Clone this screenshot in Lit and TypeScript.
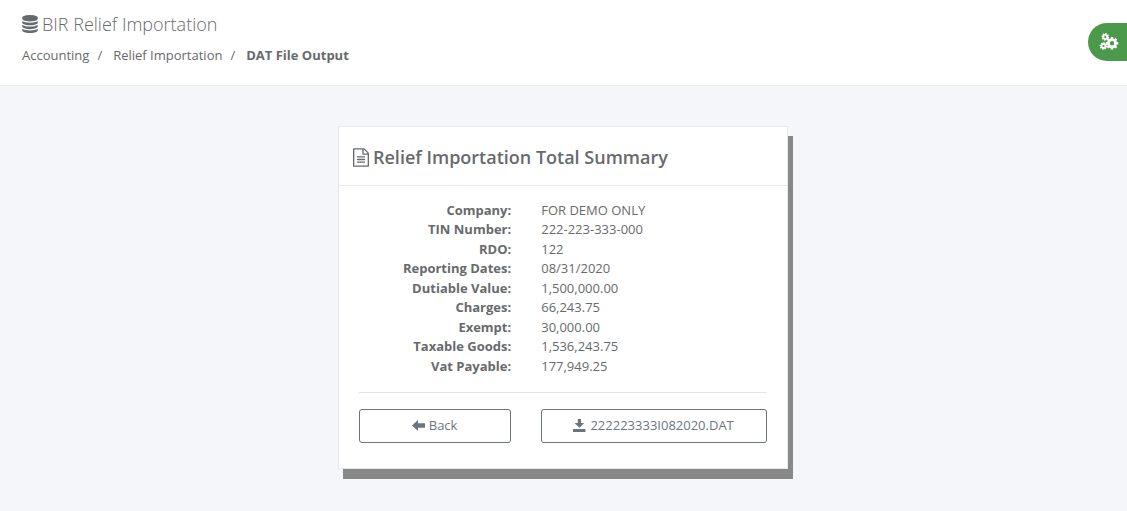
import { LitElement, html, css, svg } from "lit";
import { customElement } from "lit/decorators.js";

const DATABASE =
  "M768 768q237 0 443-43t325-127v170q0 69-103 128t-280 93.5-385 34.5-385-34.5-280-93.5-103-128v-170q119 84 325 127t443 43zm0 768q237 0 443-43t325-127v170q0 69-103 128t-280 93.5-385 34.5-385-34.5-280-93.5-103-128v-170q119 84 325 127t443 43zm0-384q237 0 443-43t325-127v170q0 69-103 128t-280 93.5-385 34.5-385-34.5-280-93.5-103-128v-170q119 84 325 127t443 43zm0-1152q208 0 385 34.5t280 93.5 103 128v128q0 69-103 128t-280 93.5-385 34.5-385-34.5-280-93.5-103-128v-128q0-69 103-128t280-93.5 385-34.5z";
const FILE_TEXT =
  "M1468 380q28 28 48 76t20 88v1152q0 40-28 68t-68 28h-1344q-40 0-68-28t-28-68v-1600q0-40 28-68t68-28h896q40 0 88 20t76 48zm-444-244v376h376q-10-29-22-41l-313-313q-12-12-41-22zm384 1528v-1024h-416q-40 0-68-28t-28-68v-416h-768v1536h1280zm-1024-864q0-14 9-23t23-9h704q14 0 23 9t9 23v64q0 14-9 23t-23 9h-704q-14 0-23-9t-9-23v-64zm736 224q14 0 23 9t9 23v64q0 14-9 23t-23 9h-704q-14 0-23-9t-9-23v-64q0-14 9-23t23-9h704zm0 256q14 0 23 9t9 23v64q0 14-9 23t-23 9h-704q-14 0-23-9t-9-23v-64q0-14 9-23t23-9h704z";

/** Outline of a toothed wheel with a round hole in the middle. */
function gear(cx: number, cy: number, outer: number, inner: number, hole: number, teeth = 8, turn = 0): string {
  const step = (Math.PI * 2) / teeth;
  const at = (r: number, a: number) =>
    `${(cx + r * Math.cos(a)).toFixed(2)} ${(cy + r * Math.sin(a)).toFixed(2)}`;
  const points: string[] = [];
  for (let i = 0; i < teeth; i++) {
    const a = i * step + turn;
    points.push(at(inner, a - step * 0.34), at(outer, a - step * 0.24), at(outer, a + step * 0.24), at(inner, a + step * 0.34));
  }
  return `M${points.join("L")}ZM${cx - hole} ${cy}a${hole} ${hole} 0 1 0 ${hole * 2} 0a${hole} ${hole} 0 1 0 ${-hole * 2} 0Z`;
}

const GEARS = [gear(13, 10.3, 6.4, 5, 2.2), gear(6.3, 3.9, 3.9, 3, 1.1, 8, 0.2), gear(4.5, 13, 3.9, 3, 1.1, 8, 0.2)];

const SUMMARY: [string, string][] = [
  ["Company:", "FOR DEMO ONLY"],
  ["TIN Number:", "222-223-333-000"],
  ["RDO:", "122"],
  ["Reporting Dates:", "08/31/2020"],
  ["Dutiable Value:", "1,500,000.00"],
  ["Charges:", "66,243.75"],
  ["Exempt:", "30,000.00"],
  ["Taxable Goods:", "1,536,243.75"],
  ["Vat Payable:", "177,949.25"],
];

@customElement("app-root")
export class AppRoot extends LitElement {
  static styles = css`
    :host {
      display: block;
      position: relative;
      min-height: 100vh;
      background: #f4f6fa;
      color: #676a6c;
      font: 13px/1.5 "Open Sans", "Noto Sans", sans-serif;
    }
    * {
      box-sizing: border-box;
    }
    svg {
      fill: currentColor;
      flex: none;
    }
    .heading {
      background: #fff;
      border-bottom: 1px solid #e7eaec;
      padding: 14px 22px 20px;
    }
    .title {
      display: flex;
      align-items: center;
      gap: 4px;
      margin: 0 0 11px;
      font-size: 18px;
      line-height: 20px;
      font-weight: 300;
    }
    .crumbs {
      display: flex;
      margin: 0;
      padding: 0;
      list-style: none;
      line-height: 20px;
    }
    .crumbs li + li::before {
      content: "/";
      padding: 0 11px 0 8px;
    }
    .crumbs a {
      color: inherit;
      text-decoration: none;
    }
    .settings {
      position: absolute;
      top: 23px;
      right: 0;
      width: 39px;
      height: 38px;
      display: flex;
      align-items: center;
      padding: 0 0 0 11px;
      border: 0;
      border-radius: 20px 0 0 20px;
      background: #4b994b;
      color: #fff;
    }
    .content {
      display: flex;
      justify-content: center;
      padding: 40px 16px 40px 15px;
    }
    .card {
      width: 100%;
      max-width: 450px;
      background: #fff;
      border: 1px solid #e7eaec;
      box-shadow: 5px 10px #888;
    }
    .card-title {
      display: flex;
      align-items: center;
      gap: 4px;
      margin: 0;
      padding: 21px 14px 17px;
      border-bottom: 1px solid #e7eaec;
      font-size: 18px;
      line-height: 1.1;
      font-weight: 600;
    }
    .card-body {
      padding: 15px 20px 25px;
    }
    .summary,
    .actions {
      margin: 0 -15px;
    }
    .row {
      display: grid;
      grid-template-columns: 41.6% 1fr;
    }
    .row > * {
      margin: 0 15px;
    }
    dt {
      font-weight: 700;
      text-align: right;
    }
    .rule {
      height: 0;
      margin: 16px 0;
      border: 0;
      border-top: 1px solid #e5e5e5;
    }
    .button {
      display: flex;
      align-items: center;
      justify-content: center;
      gap: 4px;
      height: 34px;
      padding: 0 13px 2px 12px;
      border: 1px solid #6c757d;
      border-radius: 3px;
      background: #fff;
      color: #6c757d;
      font: inherit;
      text-decoration: none;
    }
  `;

  render() {
    return html`
      <header class="heading">
        <h2 class="title">
          <svg width="16" height="18" viewBox="0 0 1536 1792" aria-hidden="true"><path d=${DATABASE}></path></svg>
          BIR Relief Importation
        </h2>
        <ol class="crumbs">
          <li><a href="#">Accounting</a></li>
          <li><a href="#">Relief Importation</a></li>
          <li><strong>DAT File Output</strong></li>
        </ol>
      </header>

      <button class="settings" type="button" aria-label="Settings">
        <svg width="20" height="18" viewBox="0 0 20 18" fill-rule="evenodd" aria-hidden="true">
          ${GEARS.map((d) => svg`<path d=${d}></path>`)}
        </svg>
      </button>

      <main class="content">
        <section class="card">
          <h3 class="card-title">
            <svg width="16" height="19" viewBox="0 0 1536 1792" aria-hidden="true"><path d=${FILE_TEXT}></path></svg>
            Relief Importation Total Summary
          </h3>
          <div class="card-body">
            <dl class="summary">
              ${SUMMARY.map(([label, value]) => html`<div class="row"><dt>${label}</dt><dd>${value}</dd></div>`)}
            </dl>
            <hr class="rule" />
            <div class="actions row">
              <button class="button" type="button">
                <svg width="13" height="11" viewBox="0 0 13 11" aria-hidden="true"><path d="M0 5.5 6 0v3.2h7v4.6H6V11z"></path></svg>
                Back
              </button>
              <a class="button" href="#">
                <svg width="13" height="13" viewBox="0 0 13 13" aria-hidden="true"><path d="M4.8 0h3.2v4h3.2L6.4 8.8 1.6 4h3.2zM0 10h12.4v3H0z"></path></svg>
                222223333I082020.DAT
              </a>
            </div>
          </div>
        </section>
      </main>
    `;
  }
}
